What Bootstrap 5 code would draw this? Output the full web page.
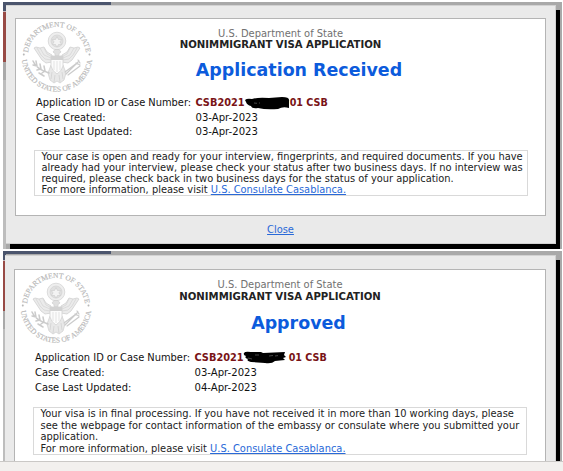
<!DOCTYPE html>
<html lang="en">
<head>
    <meta charset="UTF-8">
    <meta name="viewport" content="width=device-width, initial-scale=1.0">
    <title>Visa Application Status</title>
    <link href="https://cdn.jsdelivr.net/npm/bootstrap@5.3.0/dist/css/bootstrap.min.css" rel="stylesheet">
    <style>
        body {
            font-family: "DejaVu Sans", Verdana, sans-serif;
            font-size: 9.87px;
            line-height: 11px;
            color: #222;
            background-color: #fff;
            height: 471px;
            overflow: hidden;
        }
        .scene {
            width: 559px;
            height: 247px;
            margin-left: 3px;
            padding: 3px 5px 6px 3px;
            border-right: 1px solid #aaa;
            background:
                linear-gradient(#4b556d, #4b556d) 0 0 / 108px 3px no-repeat,
                linear-gradient(#4b556d 0 9px, #c5b8ba 9px 10px, #984a45 10px 60px, #a9a9a9 60px 78px, #bdbdbd 78px) 0 0 / 3px 100% no-repeat,
                #a9a9a9;
        }
        .scene-received {
            margin-top: 2px;
        }
        .scene-approved {
            height: 210px;
            margin-top: 2px;
            padding: 4px 5px 0 2px;
            overflow: hidden;
        }
        .dialog-box {
            height: 239px;
            padding: 12px 9px 0 9px;
            border: 1px solid #d2d2d2;
            border-left-width: 0;
            background-color: #eaeaea;
            box-shadow: 4px 5px 0 #000;
        }
        .sheet {
            height: 198px;
            border: 1px solid #b4b4b4;
            background-color: #fff;
            padding: 9px 18px 0;
        }
        .seal {
            position: absolute;
            left: 4px;
            top: 1px;
            width: 74px;
            height: 74px;
        }
        .agency {
            color: #717171;
            font-size: 9.91px;
        }
        .form-name {
            font-size: 10.15px;
        }
        .status-title {
            margin: 10px 0 16px;
            padding-left: 37px;
            font-size: 17.45px;
            line-height: 20px;
            font-weight: bold;
            color: #0c5bdc;
        }
        .case-table {
            grid-template-columns: 159.5px 1fr;
            padding-left: 2px;
            line-height: 14.5px;
            color: #111;
        }
        .case-number {
            font-weight: bold;
            font-size: 9.8px;
            color: #791316;
        }
        .case-suffix {
            margin-left: 45px;
            font-size: 9.6px;
        }
        .case-date {
            font-size: 10.1px;
        }
        .redaction {
            position: absolute;
            left: 48px;
            top: 0;
            width: 48px;
            height: 14px;
        }
        .message {
            width: 494px;
            margin-top: 10px;
            padding-left: 6.5px;
            border: 1px solid #d9d9d9;
            color: #222;
        }
        a {
            color: #2969d8;
        }
        .scene-approved .dialog-box {
            padding: 13px 9px 0 9px;
            height: 240px;
        }
        .scene-approved .sheet {
            height: 210px;
            line-height: 11.5px;
        }
        .scene-approved .status-title {
            margin: 11px 0 17px;
        }
        .scene-approved .case-table {
            line-height: 15px;
        }
        .scene-approved .message {
            margin-top: 12px;
            line-height: 11.6px;
            font-size: 9.89px;
        }
        .status-strip {
            height: 10px;
            border-top: 1px solid #cac8c6;
            background-color: #f2f0ee;
        }
    </style>
</head>
<body>
    <svg width="0" height="0" class="d-none">
        <defs>
            <path id="arc-top" d="M10.3 48 A29.2 29.2 0 1 1 63.7 48"/>
            <path id="arc-bottom" d="M2.4 30 A35.2 35.2 0 1 0 71.6 30"/>
        </defs>
        <symbol id="seal" viewBox="0 0 74 74">
            <g fill="#b8b8b8" stroke="#b8b8b8" stroke-width=".15" font-family="Liberation Serif, serif" font-size="7.5" text-anchor="middle">
                <text><textPath href="#arc-top" startOffset="50%">DEPARTMENT OF STATE</textPath></text>
                <text><textPath href="#arc-bottom" startOffset="50%">UNITED STATES OF AMERICA</textPath></text>
                <circle cx="3.8" cy="34.5" r=".9"/>
                <circle cx="69.5" cy="34.5" r=".9"/>
            </g>
            <!-- glory of stars -->
            <g fill="#eee" stroke="#d4d4d4" stroke-width=".8">
                <circle cx="37" cy="21" r="8.8"/>
                <circle cx="37" cy="21" r="6" fill="#e0e0e0"/>
                <path d="M37 16.5l1.5 3h3.2l-1.8 2.4 1.8 2.6h-3.2l-1.5 2.6-1.5-2.6h-3.2l1.8-2.6-1.8-2.4h3.2z" fill="#f3f3f3" stroke="#cacaca" stroke-width=".6"/>
            </g>
            <!-- wings -->
            <g fill="#ebebeb" stroke="#d0d0d0" stroke-width=".8" stroke-linejoin="round">
                <path d="M32 42l-6 1-4-3-4-6-4-6 2-1 4 1 4-1 3 5 5 3z"/>
                <path d="M42 42l6 1 4-3 4-6 4-6-2-1-4 1-4-1-3 5-5 3z"/>
                <path d="M17 28l4 7 4 4 6 1M20 28l4 7 7 3M24 28l3 6 4 2M57 28l-4 7-4 4-6 1M54 28l-4 7-7 3M50 28l-3 6-4 2" fill="none" stroke-width=".6"/>
            </g>
            <!-- head and tail -->
            <g fill="#e0e0e0" stroke="#cecece" stroke-width=".7">
                <path d="M33 32l2-2.5h4l2 2.5-2 1.500v2h-4v-2z"/>
                <path d="M31 45l-3 8 2 7 4 3 3-2 3 2 4-3 2-7-3-8z" fill="#e8e8e8"/>
                <path d="M32 52l-1 7M35 55l-1 7M39 55l1 7M42 52l1 7" fill="none"/>
            </g>
            <!-- shield -->
            <path d="M31 36h12v10q-1 5-6 8-5-3-6-8z" fill="#fcfcfc" stroke="#d2d2d2" stroke-width=".8"/>
            <path d="M31 36h12v4H31z" fill="#d2d2d2"/>
            <path d="M34 41v9M37 41v11M40 41v9" stroke="#dedede" stroke-width=".8"/>
            <!-- olive branch and arrows -->
            <g fill="none" stroke="#cbcbcb" stroke-linecap="round">
                <path d="M13 41q3 8 16 12M13 45l4 1-1-5M17 50l4-1-1-5M22 53l3-2-1-5M19 53l5 3" stroke-width="1.5"/>
                <path d="M46 54l13-13M45 52l12-9M48 55l12-9M58 40l2 3M56 43l4 2" stroke-width="1.2"/>
            </g>
        </symbol>
    </svg>

    <div class="scene scene-received">
        <div class="dialog-box">
            <div class="sheet position-relative">
                <svg class="seal"><use href="#seal"/></svg>
                <div class="text-center">
                    <div class="agency">U.S. Department of State</div>
                    <div class="form-name fw-bold">NONIMMIGRANT VISA APPLICATION</div>
                    <h1 class="status-title">Application Received</h1>
                </div>
                <div class="case-table d-grid">
                    <div>Application ID or Case Number:</div>
                    <div class="case-number position-relative">CSB2021<span class="case-suffix">01 CSB</span>
                        <svg class="redaction" viewBox="0 0 48 14">
                            <path d="M1 4Q3 2 8 3 14 1 25 2L38 1Q46 1 45 5V12Q39 10 34 13 22 14 14 12 8 13 7 10 3 9 2 6z"/>
                            <path d="M10 7l3 .3M15 7h1" stroke="#777" stroke-width=".6"/>
                        </svg>
                    </div>
                    <div>Case Created:</div>
                    <div class="case-date">03-Apr-2023</div>
                    <div>Case Last Updated:</div>
                    <div class="case-date">03-Apr-2023</div>
                </div>
                <div class="message text-nowrap">
                    Your case is open and ready for your interview, fingerprints, and required documents. If you have<br>
                    already had your interview, please check your status after two business days. If no interview was<br>
                    required, please check back in two business days for the status of your application.<br>
                    For more information, please visit <a href="#">U.S. Consulate Casablanca.</a>
                </div>
            </div>
            <div class="text-center pt-2"><a href="#">Close</a></div>
        </div>
    </div>

    <div class="scene scene-approved">
        <div class="dialog-box">
            <div class="sheet position-relative">
                <svg class="seal"><use href="#seal"/></svg>
                <div class="text-center">
                    <div class="agency">U.S. Department of State</div>
                    <div class="form-name fw-bold">NONIMMIGRANT VISA APPLICATION</div>
                    <h1 class="status-title">Approved</h1>
                </div>
                <div class="case-table d-grid">
                    <div>Application ID or Case Number:</div>
                    <div class="case-number position-relative">CSB2021<span class="case-suffix">01 CSB</span>
                        <svg class="redaction" viewBox="0 0 48 14">
                            <path d="M1 3Q2 1 8 2L18 2 20 3 42 2 41 5 43 7 40 8 42 10 32 11Q29 14 22 13L8 12Q3 11 5 9 1 8 3 6 0 5 1 3z"/>
                            <path d="M5 8l4 1M12 5h4M26 6l4-.5M32 6l3-.4" stroke="#777" stroke-width=".6"/>
                        </svg>
                    </div>
                    <div>Case Created:</div>
                    <div class="case-date">03-Apr-2023</div>
                    <div>Case Last Updated:</div>
                    <div class="case-date">04-Apr-2023</div>
                </div>
                <div class="message text-nowrap">
                    Your visa is in final processing. If you have not received it in more than 10 working days, please<br>
                    see the webpage for contact information of the embassy or consulate where you submitted your<br>
                    application.<br>
                    For more information, please visit <a href="#">U.S. Consulate Casablanca.</a>
                </div>
            </div>
        </div>
    </div>
    <div class="status-strip"></div>

    <script src="https://cdn.jsdelivr.net/npm/bootstrap@5.3.0/dist/js/bootstrap.bundle.min.js"></script>
</body>
</html>
